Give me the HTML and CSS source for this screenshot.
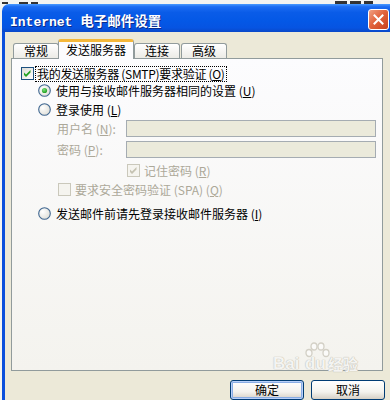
FILE: index.html
```html
<!DOCTYPE html>
<html lang="zh-CN">
<head>
<meta charset="utf-8">
<title>Internet 电子邮件设置</title>
<link rel="stylesheet" href="styles.css">
</head>
<body>
<div class="behind">
  <span class="frag f1"></span><span class="frag f2"></span><span class="frag f3"></span>
  <span class="spacer"></span>
  <span class="frag f4"></span><span class="frag f5"></span><span class="frag f6"></span>
</div>
<div class="win">
  <div class="titlebar">
    <span class="title">Internet <span class="tcjk">电子邮件设置</span></span>
    <span class="close"><svg width="11" height="11" viewBox="0 0 11 11"><path d="M1.5 1.5 L9.5 9.5 M9.5 1.5 L1.5 9.5" stroke="#fff" stroke-width="2" stroke-linecap="square"/></svg></span>
  </div>
  <div class="winbody">
    <div class="tabs">
      <div class="tab t1">常规</div>
      <div class="tab sel">发送服务器</div>
      <div class="tab t3">连接</div>
      <div class="tab t4">高级</div>
    </div>
    <div class="panel">
      <div class="row r1">
        <span class="cb"><svg width="11" height="11" viewBox="0 0 11 11"><path d="M2 4.5 L4 6.5 L8.5 2 V4.5 L4 9 L2 7 Z" fill="#21A121"/></svg></span>
        <span class="lbl focus">我的发送服务器 (SMTP)要求验证 (<u>O</u>)</span>
      </div>
      <div class="row r2">
        <span class="rb"><svg width="13" height="13" viewBox="0 0 13 13"><defs><radialGradient id="rg" cx="0.35" cy="0.35" r="0.8"><stop offset="0" stop-color="#fff"/><stop offset="1" stop-color="#DCDBD3"/></radialGradient><radialGradient id="dot" cx="0.4" cy="0.35" r="0.7"><stop offset="0" stop-color="#7BE07B"/><stop offset="1" stop-color="#1A9A1A"/></radialGradient></defs><circle cx="6.5" cy="6.5" r="5.8" fill="url(#rg)" stroke="#3F6690" stroke-width="1.1"/><circle cx="6.5" cy="6.5" r="2.6" fill="url(#dot)"/></svg></span>
        <span class="lbl">使用与接收邮件服务器相同的设置 (<u>U</u>)</span>
      </div>
      <div class="row r3">
        <span class="rb"><svg width="13" height="13" viewBox="0 0 13 13"><circle cx="6.5" cy="6.5" r="5.8" fill="url(#rg)" stroke="#3F6690" stroke-width="1.1"/></svg></span>
        <span class="lbl">登录使用 (<u>L</u>)</span>
      </div>
      <div class="row r4">
        <span class="flabel dis">用户名 (<u>N</u>):</span>
        <span class="input"></span>
      </div>
      <div class="row r5">
        <span class="flabel dis">密码 (<u>P</u>):</span>
        <span class="input"></span>
      </div>
      <div class="row r6">
        <span class="cb off"><svg width="11" height="11" viewBox="0 0 11 11"><path d="M2 4.5 L4 6.5 L8.5 2 V4.5 L4 9 L2 7 Z" fill="#C5C2B2"/></svg></span>
        <span class="lbl dis">记住密码 (<u>R</u>)</span>
      </div>
      <div class="row r7">
        <span class="cb off"></span>
        <span class="lbl dis">要求安全密码验证 (SPA) (<u>Q</u>)</span>
      </div>
      <div class="row r8">
        <span class="rb"><svg width="13" height="13" viewBox="0 0 13 13"><circle cx="6.5" cy="6.5" r="5.8" fill="url(#rg)" stroke="#3F6690" stroke-width="1.1"/></svg></span>
        <span class="lbl">发送邮件前请先登录接收邮件服务器 (<u>I</u>)</span>
      </div>
    </div>
    <div class="buttons">
      <span class="btn def">确定</span>
      <span class="btn">取消</span>
    </div>
  </div>
</div>
<div class="watermark">
  <span class="wm-bai">Bai</span><span class="wm-du">du</span><span class="wm-jy">经验</span>
  <svg class="paw" width="26" height="20" viewBox="0 0 26 20"><g fill="rgba(255,255,255,0.6)" stroke="#D3D0C6" stroke-width="1.3"><ellipse cx="5" cy="11" rx="3" ry="3.5"/><ellipse cx="10" cy="4.5" rx="3" ry="3.5"/><ellipse cx="17" cy="4.5" rx="3" ry="3.5"/><ellipse cx="22" cy="11" rx="3" ry="3.5"/></g></svg>
</div>
</body>
</html>
```
FILE: styles.css
```css
html, body {
  margin: 0;
  padding: 0;
}
body {
  width: 390px;
  height: 400px;
  overflow: hidden;
  background: #F4F4F1;
  font-family: "Noto Sans CJK SC", "Noto Sans", sans-serif;
  font-size: 12px;
  color: #000;
  position: relative;
}
.behind {
  height: 4px;
  overflow: hidden;
  display: flex;
  align-items: flex-end;
  padding: 0 14px 0 2px;
}
.frag {
  display: block;
  height: 2px;
  background: #333;
  margin-right: 3px;
}
.f1 { width: 6px; }
.f2 { width: 9px; margin-left: 8px; }
.f3 { width: 7px; }
.spacer { flex: 1; }
.f4 { width: 12px; height: 3px; }
.f5 { width: 11px; height: 3px; }
.f6 { width: 9px; height: 3px; }
.win {
  margin-left: 2px;
  width: 396px;
}
.titlebar {
  height: 28px;
  border-radius: 7px 7px 0 0;
  background: linear-gradient(#4A9BFF 0%, #1C6CF2 10%, #0A5CE8 30%, #0458E6 60%, #0654E2 85%, #0A48C8 100%);
  display: flex;
  align-items: flex-start;
  padding-left: 8px;
  box-sizing: border-box;
}
.title {
  font-family: "Liberation Mono", "Noto Sans CJK SC", monospace;
  font-weight: bold;
  font-size: 13px;
  line-height: 16px;
  color: #fff;
  margin-top: 8px;
  text-shadow: 1px 1px 0 #0A2A8A;
  white-space: pre;
}
.tcjk {
  font-family: "Noto Sans CJK SC", sans-serif;
  font-size: 13.5px;
}
.close {
  margin-left: auto;
  margin-right: 9px;
  margin-top: 5px;
  width: 21px;
  height: 21px;
  box-sizing: border-box;
  border: 1px solid #fff;
  border-radius: 3px;
  background: linear-gradient(135deg, #F0A184 0%, #E2643E 45%, #C8401A 100%);
  display: flex;
  align-items: center;
  justify-content: center;
}
.close svg { display: block; }
.winbody {
  background: #ECE9D8;
  border-left: 3px solid #0A4FDC;
  padding: 7px 0 0 6px;
  height: 361px;
}
.tabs {
  display: flex;
  align-items: flex-end;
  height: 19px;
  padding-left: 2px;
}
.tab {
  box-sizing: border-box;
  height: 15px;
  border: 1px solid #919B9C;
  border-bottom: none;
  border-radius: 3px 3px 0 0;
  background: linear-gradient(#FFFFFF, #ECEBE6);
  text-align: center;
  line-height: 14px;
  font-size: 12px;
}
.t1 { width: 46px; }
.t3 { width: 46px; }
.t4 { width: 46px; margin-left: 1px; }
.sel {
  width: 76px;
  margin-left: -1px;
  height: 20px;
  margin-bottom: -1px;
  background: #FCFCFE;
  border-top: 3px solid #F5B83A;
  line-height: 15px;
  position: relative;
  z-index: 1;
}
.panel {
  box-sizing: border-box;
  width: 372px;
  height: 313px;
  border: 1px solid #919B9C;
  background: linear-gradient(#FCFCFE, #F4F3EE);
  padding: 6px 0 0 9px;
}
.row {
  display: flex;
  align-items: center;
  height: 17px;
}
.r2 { margin-left: 17px; }
.r3 { margin-left: 17px; margin-top: 2px; }
.r4 { margin-left: 36px; margin-top: 2px; }
.r5 { margin-left: 36px; margin-top: 4px; }
.r6 { margin-left: 106px; margin-top: 4px; }
.r7 { margin-left: 37px; margin-top: 2px; }
.r8 { margin-left: 17px; margin-top: 7px; }
.cb {
  box-sizing: border-box;
  width: 13px;
  height: 13px;
  border: 1px solid #1C5180;
  background: linear-gradient(135deg, #DCDCD7, #FFFFFF);
  display: flex;
  align-items: center;
  justify-content: center;
  flex: none;
}
.cb svg { display: block; }
.cb.off {
  border-color: #CAC8BB;
  background: #F5F4EF;
}
.rb {
  width: 13px;
  height: 13px;
  flex: none;
}
.rb svg { display: block; }
.lbl {
  white-space: nowrap;
  line-height: 15px;
}
.r1 .lbl { margin-left: 1px; }
.r2 .lbl, .r3 .lbl, .r8 .lbl { margin-left: 5px; }
.r6 .lbl, .r7 .lbl { margin-left: 4px; }
.focus {
  border: 1px dotted #000;
  padding: 0 1px;
  height: 14px;
  line-height: 14px;
  letter-spacing: -0.3px;
}
.dis { color: #ACA899; }
.flabel {
  width: 69px;
  white-space: nowrap;
  line-height: 15px;
}
.input {
  box-sizing: border-box;
  width: 250px;
  height: 17px;
  border: 1px solid #A5ACB2;
  background: #EBEADB;
}
u { text-decoration: underline; text-underline-offset: 1px; }
.buttons {
  display: flex;
  gap: 7px;
  margin-top: 9px;
  padding-left: 219px;
}
.btn {
  box-sizing: border-box;
  width: 74px;
  height: 20px;
  border: 1px solid #003C74;
  border-radius: 3px;
  background: linear-gradient(#FFFFFF 0%, #F4F3EE 60%, #D6D0C5 100%);
  text-align: center;
  line-height: 17px;
  font-size: 12px;
}
.btn.def {
  box-shadow: inset 0 0 0 1px #B8D0F9, inset 0 0 0 2px #89ADE4;
}
.watermark {
  position: absolute;
  left: 272px;
  top: 342px;
  width: 95px;
  height: 34px;
  pointer-events: none;
}
.watermark span {
  position: absolute;
  top: 13px;
  font-family: "Liberation Sans", sans-serif;
  font-weight: bold;
  font-size: 17px;
  line-height: 18px;
  color: rgba(255, 255, 255, 0.85);
  text-shadow: 0 0 1px #BDBAAE, 0 0 1px #BDBAAE;
}
.wm-bai { left: 1px; }
.wm-du { left: 33px; }
.wm-jy {
  left: 56px;
  font-family: "Noto Sans CJK SC", sans-serif !important;
  font-size: 15px !important;
}
.paw {
  position: absolute;
  left: 32px;
  top: 0;
}
```
